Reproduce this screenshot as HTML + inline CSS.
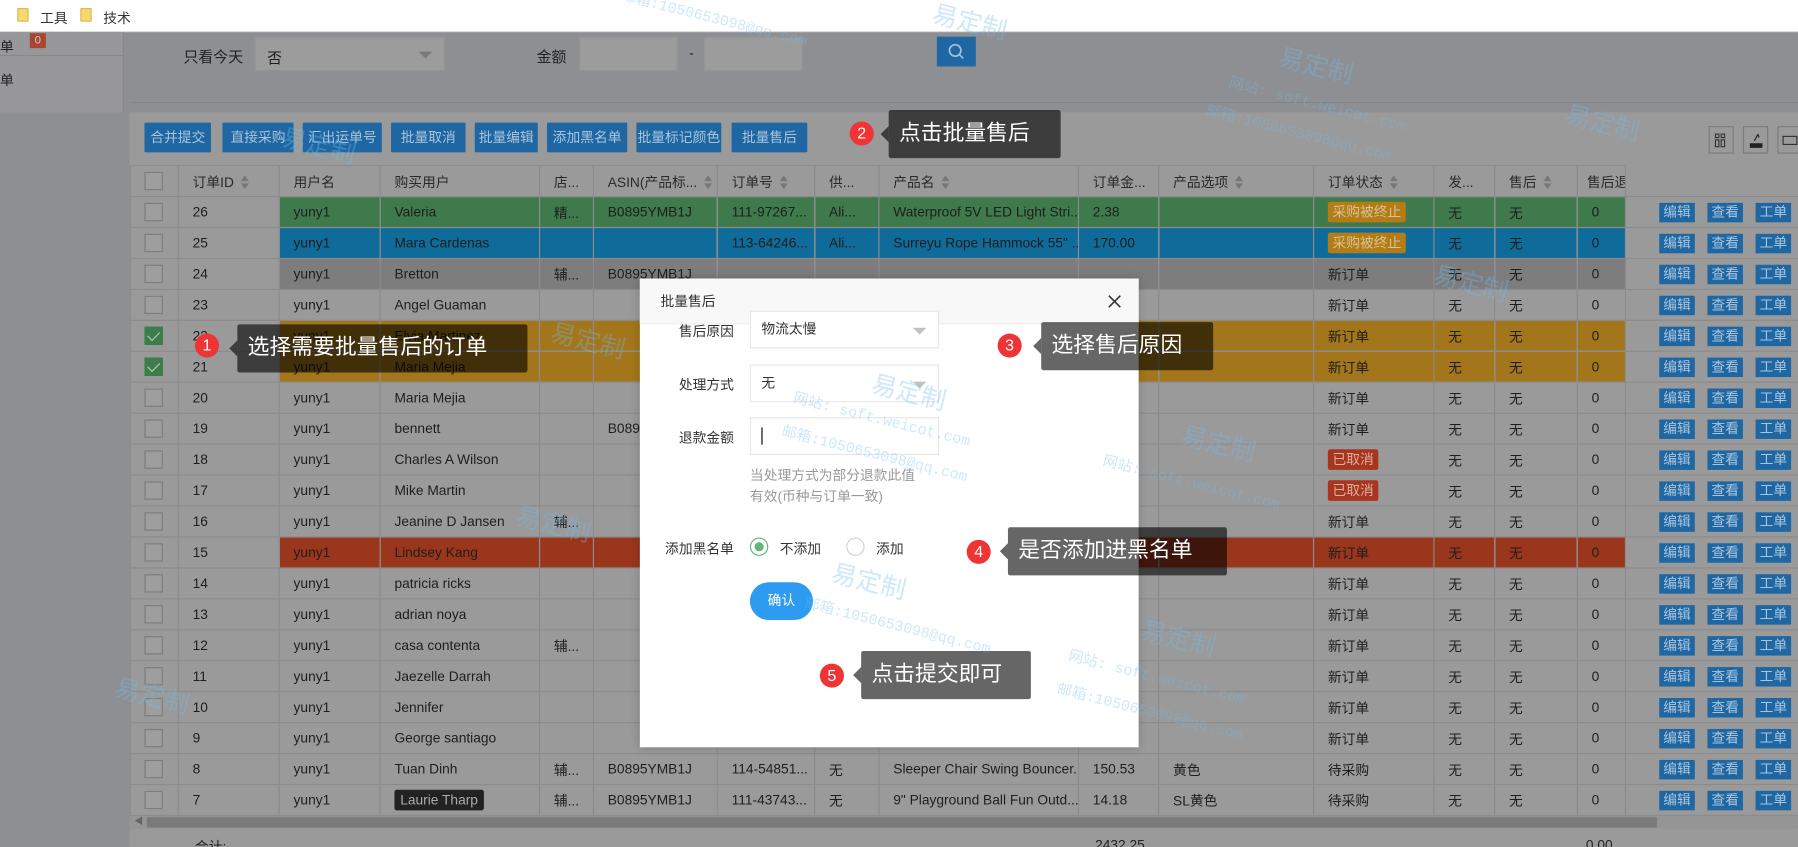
<!DOCTYPE html>
<html><head><meta charset="utf-8">
<style>
*{margin:0;padding:0;box-sizing:border-box}
html,body{width:1798px;height:847px;overflow:hidden;background:#8e8f93}
body{font-family:"Liberation Sans","Noto Sans CJK SC",sans-serif;font-size:12px;color:#1e1e1e}
#w{position:absolute;left:0;top:0;width:1568px;height:739px;transform:scale(1.14668,1.14614);transform-origin:0 0;background:#8e8f93;overflow:hidden}
.abs{position:absolute}
#top{left:0;top:0;width:1568px;height:28px;background:#fff;border-bottom:1px solid #ddd}
.fold{position:absolute;top:7px;width:10px;height:12px;background:#f7d774;border:1px solid #e0b94a;border-radius:1px}
#side{left:0;top:28px;width:108px;height:70px;background:#98989b;border-right:1px solid #888}
#filter{left:113px;top:28px;width:1455px;height:62px;background:#8e8f93}
.sel{position:absolute;background:#9c9c9c;border:1px solid #959595}
.btn{position:absolute;top:107px;height:26px;background:#1f67a2;color:#a9c4dc;font-size:12px;line-height:26px;text-align:center;border-radius:1px}
#panel{left:113px;top:98px;width:1455px;height:641px;background:#9a9a9a}
table{position:absolute;left:113px;top:144px;width:1455px;border-collapse:collapse;table-layout:fixed}
td,th{height:27px;border:1px solid #8b8b8b;padding-left:12px;white-space:nowrap;overflow:hidden;font-weight:normal;text-align:left;font-size:12px;background:#9a9a9a}
th{color:#2a2a2a}
tr.g td{background:#3e7a4c}
tr.b td{background:#0e6b9a}
tr.y td{background:#7d7d7d}
tr.o td{background:#a4761b}
tr.r td{background:#9a361c}
tr td.n,tr td.a{background:#9a9a9a}
td.a{border-left:1px solid #8b8b8b;border-right:none;padding-left:29px}
td.a b{display:inline-block;width:31px;height:17px;line-height:17px;text-align:center;background:#1f67a2;color:#a9c4dc;font-weight:normal;margin-right:11px;vertical-align:middle}
.cb{display:inline-block;width:16px;height:16px;border:1px solid #7c7c7c;background:#9e9e9e;vertical-align:middle;position:relative}
.cb.c{background:#3c7d4a;border-color:#3c7d4a}
.cb.c:after{content:"";position:absolute;left:4px;top:1px;width:5px;height:9px;border:solid #a8d0b0;border-width:0 1.5px 1.5px 0;transform:rotate(45deg)}
.tag{display:inline-block;height:18px;line-height:18px;padding:0 4px;border-radius:2px}
.tag.o{background:#b37c14;color:#d6c39a}
.tag.r{background:#a8361f;color:#dcae9e}
.tag.k{background:#222;color:#aaa;padding:0 5px}
.s{display:inline-block;width:7px;height:12px;vertical-align:middle;margin-left:6px}
#modal{left:558px;top:243px;width:435px;height:409px;background:#fff;box-shadow:0 0 8px rgba(0,0,0,.2)}
#mh{position:absolute;left:0;top:0;width:435px;height:40px;background:#f8f8f8;border-bottom:1px solid #eee;font-size:12px;line-height:40px;padding-left:18px;color:#333}
.lab{position:absolute;width:82px;text-align:right;font-size:12px;color:#333}
.inp{position:absolute;left:96px;width:165px;height:33px;border:1px solid #e6e6e6;background:#fff;font-size:12px;line-height:31px;padding-left:9px;color:#333}
.arr{position:absolute;right:10px;top:14px;width:0;height:0;border-left:6px solid transparent;border-right:6px solid transparent;border-top:6px solid #c2c2c2}
.rad{position:absolute;width:16px;height:16px;border:1px solid #d2d2d2;border-radius:50%;background:#fff}
.tip{position:absolute;height:42px;background:rgba(0,0,0,.6);color:#fff;font-size:19px;line-height:42px;padding-left:9px;border-radius:2px}
.tip:before{content:"";position:absolute;left:-7px;top:14px;border-top:7px solid transparent;border-bottom:7px solid transparent;border-right:7px solid rgba(0,0,0,.6)}
.num{position:absolute;width:21px;height:21px;border-radius:50%;background:#ee3434;color:#fff;font-size:14px;line-height:21px;text-align:center}
.wm{position:absolute;color:rgba(110,190,240,.35);transform:rotate(14deg);white-space:nowrap;font-family:"Liberation Mono","Noto Sans CJK SC",monospace;pointer-events:none}
.wm.big{font-size:22px;font-family:"Liberation Sans","Noto Sans CJK SC",sans-serif}
.wm.sm{font-size:13px}
</style></head><body>
<div id="w">
<div id="top" class="abs">
<div class="fold" style="left:15px"></div><span class="abs" style="left:35px;top:7px;color:#333">工具</span>
<div class="fold" style="left:70px"></div><span class="abs" style="left:90px;top:7px;color:#333">技术</span>
</div>
<div id="side" class="abs">
<span class="abs" style="left:0;top:4px;color:#222">单</span>
<span class="abs" style="left:26px;top:1px;width:14px;height:13px;background:#a8472f;color:#ccc;font-size:10px;text-align:center;line-height:13px">0</span>
<div class="abs" style="left:0;top:20px;width:108px;border-top:1px solid #888"></div>
<span class="abs" style="left:0;top:33px;color:#222">单</span>
</div>
<span class="abs" style="left:160px;top:39px;font-size:13px;color:#222">只看今天</span>
<div class="sel" style="left:222px;top:32px;width:166px;height:30px"><span class="abs" style="left:10px;top:7px;font-size:13px">否</span><div class="arr" style="top:12px;border-top-color:#7a7a7a"></div></div>
<span class="abs" style="left:468px;top:39px;font-size:13px;color:#222">金额</span>
<div class="sel" style="left:505px;top:32px;width:86px;height:30px"></div>
<span class="abs" style="left:601px;top:39px">-</span>
<div class="sel" style="left:614px;top:32px;width:86px;height:30px"></div>
<div class="abs" style="left:817px;top:32px;width:34px;height:26px;background:#1f67a2"><svg width="34" height="26"><circle cx="16" cy="12" r="5" fill="none" stroke="#9ec0dc" stroke-width="1.5"/><line x1="19.5" y1="15.5" x2="23" y2="19" stroke="#9ec0dc" stroke-width="1.5"/></svg></div>
<div class="abs" style="left:113px;top:89px;width:1455px;border-top:1px solid #858585"></div>
<div id="panel" class="abs"></div>
<div class="btn" style="left:126px;width:58px">合并提交</div>
<div class="btn" style="left:194px;width:62px">直接采购</div>
<div class="btn" style="left:264px;width:69px">汇出运单号</div>
<div class="btn" style="left:341px;width:65px">批量取消</div>
<div class="btn" style="left:414px;width:55px">批量编辑</div>
<div class="btn" style="left:477px;width:70px">添加黑名单</div>
<div class="btn" style="left:555px;width:74px">批量标记颜色</div>
<div class="btn" style="left:638px;width:66px">批量售后</div>
<div class="abs" style="left:1490px;top:110px;width:22px;height:24px;border:1px solid #7c7c7c"><svg width="20" height="22"><g fill="none" stroke="#333"><rect x="5" y="6" width="3" height="3"/><rect x="10" y="6" width="3" height="3"/><rect x="5" y="11" width="3" height="6"/><rect x="10" y="11" width="3" height="6"/></g></svg></div>
<div class="abs" style="left:1520px;top:110px;width:22px;height:24px;border:1px solid #7c7c7c"><svg width="20" height="22"><path d="M5 14h11v4H5z" fill="#222"/><path d="M9 12l3-6M12 6l1 3" stroke="#222" fill="none"/></svg></div>
<div class="abs" style="left:1550px;top:110px;width:22px;height:24px;border:1px solid #7c7c7c"><svg width="20" height="22"><rect x="4" y="8" width="12" height="7" fill="none" stroke="#333"/></svg></div>

<table>
<colgroup><col style="width:42px"><col style="width:88px"><col style="width:88px"><col style="width:139px"><col style="width:47px"><col style="width:108px"><col style="width:85px"><col style="width:56px"><col style="width:174px"><col style="width:70px"><col style="width:135px"><col style="width:105px"><col style="width:53px"><col style="width:72px"><col style="width:42px"><col style="width:151px"></colgroup>
<tr><th><i class="cb"></i></th><th>订单ID<svg class="s" viewBox="0 0 7 12"><path d="M0 5L3.5 0 7 5zM0 7l3.5 5L7 7z" fill="#777"/></svg></th><th>用户名</th><th>购买用户</th><th>店...</th><th>ASIN(产品标...<svg class="s" viewBox="0 0 7 12"><path d="M0 5L3.5 0 7 5zM0 7l3.5 5L7 7z" fill="#777"/></svg></th><th>订单号<svg class="s" viewBox="0 0 7 12"><path d="M0 5L3.5 0 7 5zM0 7l3.5 5L7 7z" fill="#777"/></svg></th><th>供...</th><th>产品名<svg class="s" viewBox="0 0 7 12"><path d="M0 5L3.5 0 7 5zM0 7l3.5 5L7 7z" fill="#777"/></svg></th><th>订单金...</th><th>产品选项<svg class="s" viewBox="0 0 7 12"><path d="M0 5L3.5 0 7 5zM0 7l3.5 5L7 7z" fill="#777"/></svg></th><th>订单状态<svg class="s" viewBox="0 0 7 12"><path d="M0 5L3.5 0 7 5zM0 7l3.5 5L7 7z" fill="#777"/></svg></th><th>发...</th><th>售后<svg class="s" viewBox="0 0 7 12"><path d="M0 5L3.5 0 7 5zM0 7l3.5 5L7 7z" fill="#777"/></svg></th><th style="padding-left:8px">售后退</th><th class="a" style="border-top:none"></th></tr>
<tr class="g"><td class="n"><i class="cb"></i></td><td class="n">26</td><td>yuny1</td><td>Valeria</td><td>精...</td><td>B0895YMB1J</td><td>111-97267...</td><td>Ali...</td><td>Waterproof 5V LED Light Stri...</td><td>2.38</td><td></td><td><span class="tag o">采购被终止</span></td><td>无</td><td>无</td><td>0</td><td class="a"><b>编辑</b><b>查看</b><b>工单</b></td></tr>
<tr class="b"><td class="n"><i class="cb"></i></td><td class="n">25</td><td>yuny1</td><td>Mara Cardenas</td><td></td><td></td><td>113-64246...</td><td>Ali...</td><td>Surreyu Rope Hammock 55" ...</td><td>170.00</td><td></td><td><span class="tag o">采购被终止</span></td><td>无</td><td>无</td><td>0</td><td class="a"><b>编辑</b><b>查看</b><b>工单</b></td></tr>
<tr class="y"><td class="n"><i class="cb"></i></td><td class="n">24</td><td>yuny1</td><td>Bretton</td><td>辅...</td><td>B0895YMB1J</td><td></td><td></td><td></td><td></td><td></td><td>新订单</td><td>无</td><td>无</td><td>0</td><td class="a"><b>编辑</b><b>查看</b><b>工单</b></td></tr>
<tr><td class="n"><i class="cb"></i></td><td class="n">23</td><td>yuny1</td><td>Angel Guaman</td><td></td><td></td><td></td><td></td><td></td><td></td><td></td><td>新订单</td><td>无</td><td>无</td><td>0</td><td class="a"><b>编辑</b><b>查看</b><b>工单</b></td></tr>
<tr class="o"><td class="n"><i class="cb c"></i></td><td class="n">22</td><td>yuny1</td><td>Elvia Martinez</td><td></td><td></td><td></td><td></td><td></td><td></td><td></td><td>新订单</td><td>无</td><td>无</td><td>0</td><td class="a"><b>编辑</b><b>查看</b><b>工单</b></td></tr>
<tr class="o"><td class="n"><i class="cb c"></i></td><td class="n">21</td><td>yuny1</td><td>Maria Mejia</td><td></td><td></td><td></td><td></td><td></td><td></td><td></td><td>新订单</td><td>无</td><td>无</td><td>0</td><td class="a"><b>编辑</b><b>查看</b><b>工单</b></td></tr>
<tr><td class="n"><i class="cb"></i></td><td class="n">20</td><td>yuny1</td><td>Maria Mejia</td><td></td><td></td><td></td><td></td><td></td><td></td><td></td><td>新订单</td><td>无</td><td>无</td><td>0</td><td class="a"><b>编辑</b><b>查看</b><b>工单</b></td></tr>
<tr><td class="n"><i class="cb"></i></td><td class="n">19</td><td>yuny1</td><td>bennett</td><td></td><td>B0895YMB1J</td><td></td><td></td><td></td><td></td><td></td><td>新订单</td><td>无</td><td>无</td><td>0</td><td class="a"><b>编辑</b><b>查看</b><b>工单</b></td></tr>
<tr><td class="n"><i class="cb"></i></td><td class="n">18</td><td>yuny1</td><td>Charles A Wilson</td><td></td><td></td><td></td><td></td><td></td><td></td><td></td><td><span class="tag r">已取消</span></td><td>无</td><td>无</td><td>0</td><td class="a"><b>编辑</b><b>查看</b><b>工单</b></td></tr>
<tr><td class="n"><i class="cb"></i></td><td class="n">17</td><td>yuny1</td><td>Mike Martin</td><td></td><td></td><td></td><td></td><td></td><td></td><td></td><td><span class="tag r">已取消</span></td><td>无</td><td>无</td><td>0</td><td class="a"><b>编辑</b><b>查看</b><b>工单</b></td></tr>
<tr><td class="n"><i class="cb"></i></td><td class="n">16</td><td>yuny1</td><td>Jeanine D Jansen</td><td>辅...</td><td></td><td></td><td></td><td></td><td></td><td></td><td>新订单</td><td>无</td><td>无</td><td>0</td><td class="a"><b>编辑</b><b>查看</b><b>工单</b></td></tr>
<tr class="r"><td class="n"><i class="cb"></i></td><td class="n">15</td><td>yuny1</td><td>Lindsey Kang</td><td></td><td></td><td></td><td></td><td></td><td></td><td></td><td>新订单</td><td>无</td><td>无</td><td>0</td><td class="a"><b>编辑</b><b>查看</b><b>工单</b></td></tr>
<tr><td class="n"><i class="cb"></i></td><td class="n">14</td><td>yuny1</td><td>patricia ricks</td><td></td><td></td><td></td><td></td><td></td><td></td><td></td><td>新订单</td><td>无</td><td>无</td><td>0</td><td class="a"><b>编辑</b><b>查看</b><b>工单</b></td></tr>
<tr><td class="n"><i class="cb"></i></td><td class="n">13</td><td>yuny1</td><td>adrian noya</td><td></td><td></td><td></td><td></td><td></td><td></td><td></td><td>新订单</td><td>无</td><td>无</td><td>0</td><td class="a"><b>编辑</b><b>查看</b><b>工单</b></td></tr>
<tr><td class="n"><i class="cb"></i></td><td class="n">12</td><td>yuny1</td><td>casa contenta</td><td>辅...</td><td></td><td></td><td></td><td></td><td></td><td></td><td>新订单</td><td>无</td><td>无</td><td>0</td><td class="a"><b>编辑</b><b>查看</b><b>工单</b></td></tr>
<tr><td class="n"><i class="cb"></i></td><td class="n">11</td><td>yuny1</td><td>Jaezelle Darrah</td><td></td><td></td><td></td><td></td><td></td><td></td><td></td><td>新订单</td><td>无</td><td>无</td><td>0</td><td class="a"><b>编辑</b><b>查看</b><b>工单</b></td></tr>
<tr><td class="n"><i class="cb"></i></td><td class="n">10</td><td>yuny1</td><td>Jennifer</td><td></td><td></td><td></td><td></td><td></td><td></td><td></td><td>新订单</td><td>无</td><td>无</td><td>0</td><td class="a"><b>编辑</b><b>查看</b><b>工单</b></td></tr>
<tr><td class="n"><i class="cb"></i></td><td class="n">9</td><td>yuny1</td><td>George santiago</td><td></td><td></td><td></td><td></td><td></td><td></td><td></td><td>新订单</td><td>无</td><td>无</td><td>0</td><td class="a"><b>编辑</b><b>查看</b><b>工单</b></td></tr>
<tr><td class="n"><i class="cb"></i></td><td class="n">8</td><td>yuny1</td><td>Tuan Dinh</td><td>辅...</td><td>B0895YMB1J</td><td>114-54851...</td><td>无</td><td>Sleeper Chair Swing Bouncer...</td><td>150.53</td><td>黄色</td><td>待采购</td><td>无</td><td>无</td><td>0</td><td class="a"><b>编辑</b><b>查看</b><b>工单</b></td></tr>
<tr><td class="n"><i class="cb"></i></td><td class="n">7</td><td>yuny1</td><td><span class="tag k">Laurie Tharp</span></td><td>辅...</td><td>B0895YMB1J</td><td>111-43743...</td><td>无</td><td>9" Playground Ball Fun Outd...</td><td>14.18</td><td>SL黄色</td><td>待采购</td><td>无</td><td>无</td><td>0</td><td class="a"><b>编辑</b><b>查看</b><b>工单</b></td></tr>
</table>
<div class="abs" style="left:113px;top:712px;width:1455px;height:11px;background:#959595"></div>
<div class="abs" style="left:128px;top:713px;width:1317px;height:9px;background:#7a7a7a"></div>
<span class="abs" style="left:117px;top:711px;font-size:8px;color:#666">◀</span>
<span class="abs" style="left:170px;top:730px;color:#222">合计:</span>
<span class="abs" style="left:955px;top:730px;color:#222">2432.25</span>
<span class="abs" style="left:1383px;top:730px;color:#222">0.00</span>

<div id="modal" class="abs">
<div id="mh">批量售后</div>
<svg class="abs" style="left:408px;top:14px" width="12" height="12"><path d="M1 1L11 11M11 1L1 11" stroke="#333" stroke-width="1.4"/></svg>
<div class="lab" style="left:0;top:37px">售后原因</div>
<div class="inp" style="top:28px">物流太慢<div class="arr"></div></div>
<div class="lab" style="left:0;top:84px">处理方式</div>
<div class="inp" style="top:75px">无<div class="arr"></div></div>
<div class="lab" style="left:0;top:130px">退款金额</div>
<div class="inp" style="top:121px"><span style="display:inline-block;width:1px;height:15px;background:#000;vertical-align:middle"></span></div>
<div class="abs" style="left:96px;top:163px;font-size:12px;color:#999;line-height:18px">当处理方式为部分退款此值<br>有效(币种与订单一致)</div>
<div class="lab" style="left:0;top:227px">添加黑名单</div>
<div class="rad" style="left:96px;top:226px;border-color:#5fb878"><div style="position:absolute;left:3px;top:3px;width:8px;height:8px;border-radius:50%;background:#5fb878"></div></div>
<span class="abs" style="left:122px;top:227px;color:#333">不添加</span>
<div class="rad" style="left:180px;top:226px"></div>
<span class="abs" style="left:206px;top:227px;color:#333">添加</span>
<div class="abs" style="left:96px;top:265px;width:55px;height:33px;border-radius:17px;background:#2d9cf0;color:#fff;text-align:center;line-height:33px;font-size:12px">确认</div>
</div>

<div class="num" style="left:170px;top:291px">1</div><div class="tip" style="left:207px;top:283px;width:253px">选择需要批量售后的订单</div>
<div class="num" style="left:741px;top:106px">2</div><div class="tip" style="left:775px;top:96px;width:150px">点击批量售后</div>
<div class="num" style="left:870px;top:291px">3</div><div class="tip" style="left:908px;top:281px;width:150px">选择售后原因</div>
<div class="num" style="left:843px;top:471px">4</div><div class="tip" style="left:879px;top:460px;width:191px">是否添加进黑名单</div>
<div class="num" style="left:715px;top:579px">5</div><div class="tip" style="left:751px;top:568px;width:148px">点击提交即可</div>

<div class="wm big" style="left:813px;top:2px">易定制</div>
<div class="wm sm" style="left:540px;top:5px">邮箱:1050653098@qq.com</div>
<div class="wm big" style="left:1115px;top:40px">易定制</div>
<div class="wm sm" style="left:1070px;top:80px">网站: soft.weicot.com</div>
<div class="wm sm" style="left:1050px;top:105px">邮箱:1050653098@qq.com</div>
<div class="wm big" style="left:1365px;top:90px">易定制</div>
<div class="wm big" style="left:245px;top:110px">易定制</div>
<div class="wm big" style="left:480px;top:280px">易定制</div>
<div class="wm big" style="left:760px;top:325px">易定制</div>
<div class="wm sm" style="left:690px;top:355px">网站: soft.weicot.com</div>
<div class="wm sm" style="left:680px;top:385px">邮箱:1050653098@qq.com</div>
<div class="wm big" style="left:1030px;top:370px">易定制</div>
<div class="wm sm" style="left:960px;top:410px">网站: soft.weicot.com</div>
<div class="wm big" style="left:450px;top:440px">易定制</div>
<div class="wm big" style="left:725px;top:490px">易定制</div>
<div class="wm sm" style="left:700px;top:535px">邮箱:1050653098@qq.com</div>
<div class="wm big" style="left:995px;top:540px">易定制</div>
<div class="wm sm" style="left:930px;top:580px">网站: soft.weicot.com</div>
<div class="wm sm" style="left:920px;top:610px">邮箱:1050653098@qq.com</div>
<div class="wm big" style="left:1250px;top:230px">易定制</div>
<div class="wm big" style="left:100px;top:590px">易定制</div>
</div>
</body></html>
